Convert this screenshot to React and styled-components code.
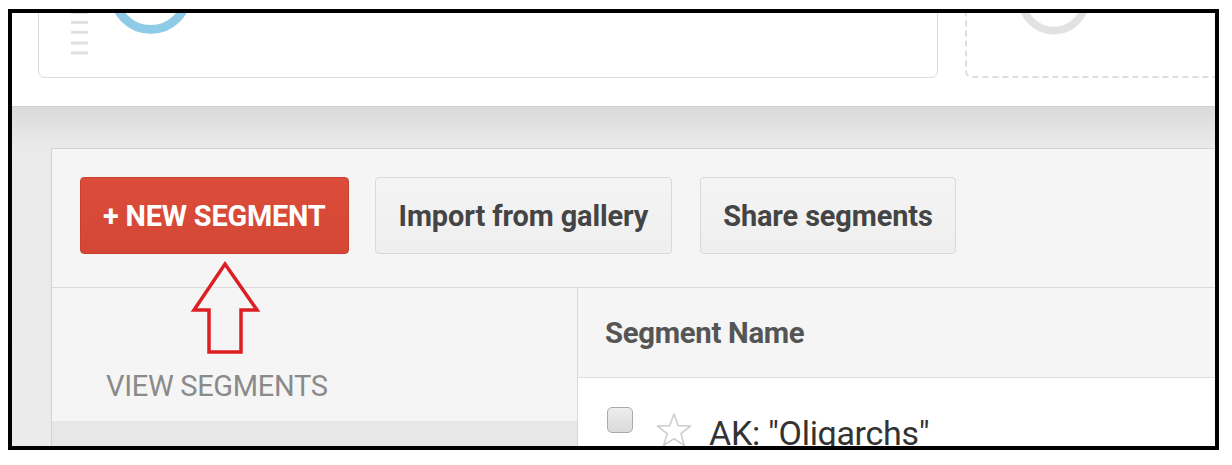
import styled, { createGlobalStyle } from 'styled-components';

const GlobalStyle = createGlobalStyle`
  html, body {
    margin: 0;
    padding: 0;
    background: #ffffff;
  }
  body {
    font-family: Roboto, "Liberation Sans", Arial, sans-serif;
  }
`;

const Page = styled.div`
  width: 1232px;
  height: 465px;
  box-sizing: border-box;
  padding: 9px 13px 15px 8px;
  background: #ffffff;
`;

const Frame = styled.div`
  position: relative;
  height: 100%;
  box-sizing: border-box;
  border: 4px solid #000;
  overflow: hidden;
  display: flex;
  flex-direction: column;
  background: #ffffff;
`;

const TopStrip = styled.div`
  flex: none;
  height: 94px;
  box-sizing: border-box;
  border-bottom: 1px solid #cfcfcf;
  display: flex;
  align-items: flex-end;
  gap: 27px;
  padding: 0 0 28px 26px;
  overflow: hidden;
`;

const Card = styled.div`
  flex: none;
  width: ${(p) => p.$width}px;
  height: 120px;
  box-sizing: border-box;
  border: ${(p) => (p.$dashed ? '2px dashed #dedede' : '1px solid #dcdcdc')};
  border-radius: 7px;
  background: #fff;
`;

const CardArt = styled.svg`
  display: block;
  width: 100%;
  height: 100%;
`;

const Workspace = styled.div`
  flex: 1;
  display: flex;
  flex-direction: column;
  padding: 41px 0 0 39px;
  background: linear-gradient(#dadada 0px, #e6e6e6 30px, #eaeaea 41px, #ebebeb 100%);
`;

const Panel = styled.div`
  flex: 1;
  margin-right: -20px;
  display: flex;
  flex-direction: column;
  background: #f5f5f5;
  border-top: 1px solid #d2d2d2;
  border-left: 1px solid #d2d2d2;
`;

const Toolbar = styled.div`
  display: flex;
  gap: 26px;
  padding: 28px 28px 33px;
  border-bottom: 1px solid #dadada;

  & > :last-child {
    margin-left: 2px;
  }
`;

const Button = styled.button`
  height: 77px;
  padding: 0 ${(p) => p.$pad}px;
  border-radius: 4px;
  font-family: Roboto, "Liberation Sans", Arial, sans-serif;
  font-weight: 700;
  font-size: 28.9px;
  letter-spacing: ${(p) => (p.$primary ? '-0.2px' : '-0.1px')};
  cursor: pointer;
  border: 1px solid ${(p) => (p.$primary ? '#c8412f' : '#d9d9d9')};
  color: ${(p) => (p.$primary ? '#fff' : '#444')};
  background: ${(p) =>
    p.$primary
      ? 'linear-gradient(#dc4c3b, #d44735)'
      : 'linear-gradient(#f4f4f4, #efefef)'};
`;

const Body = styled.div`
  flex: 1;
  display: grid;
  grid-template-columns: 526px 1fr;
`;

const SideNav = styled.div`
  display: flex;
  flex-direction: column;
  border-right: 1px solid #d8d8d8;
`;

const SideLabel = styled.div`
  padding: 82px 0 0 54px;
  height: 133px;
  box-sizing: border-box;
  font-size: 29px;
  line-height: 32px;
  color: #8a8a8a;
  letter-spacing: -0.3px;
`;

const SideItem = styled.div`
  flex: 1;
  background: #e7e7e7;
`;

const ListPane = styled.div`
  display: flex;
  flex-direction: column;
`;

const ListHeader = styled.div`
  height: 90px;
  box-sizing: border-box;
  display: flex;
  align-items: center;
  padding-left: 27px;
  border-bottom: 1px solid #dedede;
  font-weight: 700;
  font-size: 29.3px;
  color: #555;
  letter-spacing: -0.3px;
`;

const Rows = styled.div`
  flex: 1;
  background: #fff;
  padding: 29px 0 0 29px;
`;

const Row = styled.div`
  display: flex;
  align-items: flex-start;
`;

const Checkbox = styled.span`
  flex: none;
  width: 26px;
  height: 26px;
  box-sizing: border-box;
  border: 1px solid #a9a9a9;
  border-radius: 5px;
  background: linear-gradient(#eeeeee, #d9d9d9);
`;

const Star = styled.svg`
  flex: none;
  width: 38px;
  height: 36px;
  margin: 5px 0 0 22px;
`;

const RowName = styled.span`
  margin: 7px 0 0 16px;
  font-size: 34px;
  line-height: 38px;
  color: #333;
  letter-spacing: -0.3px;
`;

const Annotation = styled.svg`
  position: absolute;
  left: 0;
  top: 0;
  width: 100%;
  height: 100%;
  pointer-events: none;
`;

function App() {
  return (
    <Page>
      <GlobalStyle />
      <Frame>
        <TopStrip>
          <Card $width={900}>
            <CardArt viewBox="0 0 900 120">
              {[53, 63, 73, 84, 94].map((y) => (
                <rect key={y} x="26" y={y} width="17" height="3" fill="#e0e0e0" />
              ))}
              <circle cx="107" cy="34" r="37.5" fill="none" stroke="#8ecbe6" strokeWidth="9" />
            </CardArt>
          </Card>
          <Card $width={400} $dashed>
            <CardArt viewBox="0 0 400 120">
              <circle cx="85" cy="40" r="33" fill="none" stroke="#e2e2e2" strokeWidth="8" />
            </CardArt>
          </Card>
        </TopStrip>
        <Workspace>
          <Panel>
            <Toolbar>
              <Button $primary $pad={22}>+ NEW SEGMENT</Button>
              <Button $pad={23}>Import from gallery</Button>
              <Button $pad={22}>Share segments</Button>
            </Toolbar>
            <Body>
              <SideNav>
                <SideLabel>VIEW SEGMENTS</SideLabel>
                <SideItem />
              </SideNav>
              <ListPane>
                <ListHeader>Segment Name</ListHeader>
                <Rows>
                  <Row>
                    <Checkbox />
                    <Star viewBox="0 0 38 36">
                      <polygon
                        points="19,2 23.3,13.6 35.6,14 25.9,21.6 29.3,33.5 19,26.6 8.7,33.5 12.1,21.6 2.4,14 14.7,13.6"
                        fill="none"
                        stroke="#cfcfcf"
                        strokeWidth="1.6"
                        strokeLinejoin="round"
                      />
                    </Star>
                    <RowName>AK: "Oligarchs"</RowName>
                  </Row>
                </Rows>
              </ListPane>
            </Body>
          </Panel>
        </Workspace>
        {/* red arrow pointing at the new segment button */}
        <Annotation viewBox="12 13 1203 433">
          <polygon
            points="225,264 257,310 241,310 241,352 209,352 209,310 194,310"
            fill="none"
            stroke="#dc1f24"
            strokeWidth="3.5"
            strokeLinejoin="miter"
          />
        </Annotation>
      </Frame>
    </Page>
  );
}

export default App;
